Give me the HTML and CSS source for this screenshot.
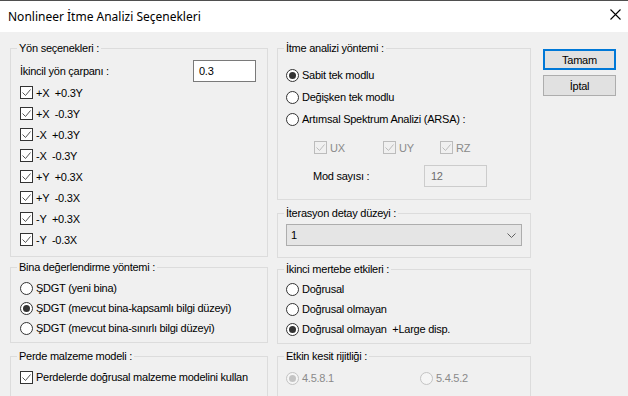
FILE: index.html
```html
<!DOCTYPE html>
<html lang="tr">
<head>
    <meta charset="UTF-8">
    <title>Nonlineer İtme Analizi Seçenekleri</title>
    <link rel="stylesheet" href="styles.css">
</head>
<body>
    <div class="titlebar">
        <span class="title">Nonlineer İtme Analizi Seçenekleri</span>
        <svg class="close" width="11" height="11" viewBox="0 0 11 11"><path d="M0.5 0.5 L10.5 10.5 M10.5 0.5 L0.5 10.5" stroke="#000" stroke-width="1.1" fill="none"/></svg>
    </div>

    <div class="main">
        <div class="col col-left">
            <fieldset class="g-yon">
                <legend>Yön seçenekleri :</legend>
                <div class="row-input">
                    <span>İkincil yön çarpanı :</span>
                    <div class="textbox">0.3</div>
                </div>
                <div class="opt"><span class="cb"><svg viewBox="0 0 11 11"><path d="M1.5 5.5 L4.5 8.5 L9.5 2.5" /></svg></span>+X  +0.3Y</div>
                <div class="opt"><span class="cb"><svg viewBox="0 0 11 11"><path d="M1.5 5.5 L4.5 8.5 L9.5 2.5" /></svg></span>+X  -0.3Y</div>
                <div class="opt"><span class="cb"><svg viewBox="0 0 11 11"><path d="M1.5 5.5 L4.5 8.5 L9.5 2.5" /></svg></span>-X  +0.3Y</div>
                <div class="opt"><span class="cb"><svg viewBox="0 0 11 11"><path d="M1.5 5.5 L4.5 8.5 L9.5 2.5" /></svg></span>-X  -0.3Y</div>
                <div class="opt"><span class="cb"><svg viewBox="0 0 11 11"><path d="M1.5 5.5 L4.5 8.5 L9.5 2.5" /></svg></span>+Y  +0.3X</div>
                <div class="opt"><span class="cb"><svg viewBox="0 0 11 11"><path d="M1.5 5.5 L4.5 8.5 L9.5 2.5" /></svg></span>+Y  -0.3X</div>
                <div class="opt"><span class="cb"><svg viewBox="0 0 11 11"><path d="M1.5 5.5 L4.5 8.5 L9.5 2.5" /></svg></span>-Y  +0.3X</div>
                <div class="opt"><span class="cb"><svg viewBox="0 0 11 11"><path d="M1.5 5.5 L4.5 8.5 L9.5 2.5" /></svg></span>-Y  -0.3X</div>
            </fieldset>

            <fieldset class="g-bina">
                <legend>Bina değerlendirme yöntemi :</legend>
                <div class="opt r20"><span class="rb"></span>ŞDGT (yeni bina)</div>
                <div class="opt r20"><span class="rb on"></span>ŞDGT (mevcut bina-kapsamlı bilgi düzeyi)</div>
                <div class="opt r20"><span class="rb"></span>ŞDGT (mevcut bina-sınırlı bilgi düzeyi)</div>
            </fieldset>

            <fieldset class="g-perde">
                <legend>Perde malzeme modeli :</legend>
                <div class="opt r20"><span class="cb"><svg viewBox="0 0 11 11"><path d="M1.5 5.5 L4.5 8.5 L9.5 2.5" /></svg></span>Perdelerde doğrusal malzeme modelini kullan</div>
            </fieldset>
        </div>

        <div class="col col-right">
            <fieldset class="g-itme">
                <legend>İtme analizi yöntemi :</legend>
                <div class="opt r22"><span class="rb on"></span>Sabit tek modlu</div>
                <div class="opt r22"><span class="rb"></span>Değişken tek modlu</div>
                <div class="opt r22"><span class="rb"></span>Artımsal Spektrum Analizi (ARSA) :</div>
                <div class="sub-checks">
                    <div class="opt dis w-ux"><span class="cb"><svg viewBox="0 0 11 11"><path d="M1.5 5.5 L4.5 8.5 L9.5 2.5" /></svg></span>UX</div>
                    <div class="opt dis w-uy"><span class="cb"><svg viewBox="0 0 11 11"><path d="M1.5 5.5 L4.5 8.5 L9.5 2.5" /></svg></span>UY</div>
                    <div class="opt dis"><span class="cb"><svg viewBox="0 0 11 11"><path d="M1.5 5.5 L4.5 8.5 L9.5 2.5" /></svg></span>RZ</div>
                </div>
                <div class="mod-row">
                    <span>Mod sayısı :</span>
                    <div class="textbox dis">12</div>
                </div>
            </fieldset>

            <fieldset class="g-iter">
                <legend>İterasyon detay düzeyi :</legend>
                <div class="select">
                    <span>1</span>
                    <svg width="9" height="5" viewBox="0 0 9 5"><path d="M0.5 0.5 L4.5 4.5 L8.5 0.5" stroke="#606060" fill="none"/></svg>
                </div>
            </fieldset>

            <fieldset class="g-ikinci">
                <legend>İkinci mertebe etkileri :</legend>
                <div class="opt r20"><span class="rb"></span>Doğrusal</div>
                <div class="opt r20"><span class="rb"></span>Doğrusal olmayan</div>
                <div class="opt r20"><span class="rb on"></span>Doğrusal olmayan  +Large disp.</div>
            </fieldset>

            <fieldset class="g-etkin">
                <legend>Etkin kesit rijitliği :</legend>
                <div class="etkin-row">
                    <div class="opt dis w-451"><span class="rb on"></span>4.5.8.1</div>
                    <div class="opt dis"><span class="rb"></span>5.4.5.2</div>
                </div>
            </fieldset>
        </div>

        <div class="buttons">
            <button class="btn default">Tamam</button>
            <button class="btn">İptal</button>
        </div>
    </div>
</body>
</html>
```

FILE: styles.css
```css
body {
    margin: 0;
    width: 628px;
    height: 396px;
    overflow: hidden;
    background: #f0f0f0;
    font-family: "Liberation Sans", Tahoma, sans-serif;
    font-size: 11px;
    letter-spacing: -0.25px;
    color: #000;
}

.titlebar {
    height: 31px;
    background: #fff;
    border-top: 1px solid #4f4f4f;
    display: flex;
    align-items: center;
    justify-content: space-between;
    padding: 0 7px 0 8px;
}

.title {
    font-family: "Noto Sans", sans-serif;
    font-size: 12px;
    letter-spacing: 0;
    margin-top: -1px;
}

.close {
    margin-top: -4px;
}

.main {
    display: flex;
    padding: 10px 0 0 10px;
}

.col {
    display: flex;
    flex-direction: column;
}

.col-left {
    width: 258px;
}

.col-right {
    width: 254px;
    margin-left: 9px;
}

fieldset {
    margin: 0;
    padding: 0;
    border: 1px solid #dcdcdc;
    box-sizing: border-box;
    min-width: 0;
}

legend {
    margin-left: 6px;
    padding: 0 2px;
    line-height: 13px;
}

.col-left fieldset > div {
    margin-left: 9px;
}

.col-right fieldset > div {
    margin-left: 8px;
}

/* sol kolon */
.g-yon {
    height: 215px;
    padding-top: 5px;
}

.g-bina {
    height: 82px;
    margin-top: 4px;
    padding-top: 4px;
}

.g-perde {
    height: 60px;
    margin-top: 7px;
    padding-top: 4px;
}

.row-input {
    display: flex;
    align-items: center;
    justify-content: space-between;
    padding-right: 11px;
    height: 22px;
}

.textbox {
    width: 63px;
    height: 22px;
    box-sizing: border-box;
    border: 1px solid #7a7a7a;
    background: #fff;
    padding-left: 5px;
    line-height: 20px;
}

.textbox.dis {
    border-color: #cccccc;
    background: #f0f0f0;
    color: #6d6d6d;
    padding-left: 6px;
}

.opt {
    display: flex;
    align-items: center;
    height: 21px;
    white-space: pre;
}

.opt.r20 {
    height: 20px;
}

.opt.r22 {
    height: 22px;
}

.opt.dis {
    color: #8a8a8a;
}

.cb {
    width: 13px;
    height: 13px;
    box-sizing: border-box;
    border: 1px solid #333;
    background: #fff;
    margin-right: 3px;
    flex: none;
}

.cb svg {
    display: block;
    width: 11px;
    height: 11px;
}

.cb path {
    stroke: #555;
    stroke-width: 1;
    fill: none;
}

.dis .cb {
    border-color: #bcbcbc;
    background: #f0f0f0;
}

.dis .cb path {
    stroke: #bcbcbc;
}

.rb {
    width: 13px;
    height: 13px;
    box-sizing: border-box;
    border: 1px solid #333;
    border-radius: 50%;
    background: #fff;
    margin-right: 3px;
    flex: none;
    display: flex;
    align-items: center;
    justify-content: center;
}

.rb.on::after {
    content: "";
    width: 7px;
    height: 7px;
    border-radius: 50%;
    background: #333;
}

.dis .rb {
    border-color: #c4c4c4;
    background: #f5f5f5;
}

.dis .rb.on::after {
    background: #c4c4c4;
}

/* sağ kolon */
.g-itme {
    height: 158px;
    padding-top: 9px;
}

.sub-checks {
    display: flex;
    margin-top: 7px;
    padding-left: 28px;
}

.w-ux {
    width: 69px;
}

.w-uy {
    width: 57px;
}

.mod-row {
    display: flex;
    align-items: center;
    margin-top: 7px;
    padding-left: 27px;
}

.mod-row span {
    width: 111px;
}

.g-iter {
    height: 51px;
    margin-top: 7px;
    padding-top: 4px;
}

.select {
    width: 236px;
    height: 22px;
    box-sizing: border-box;
    border: 1px solid #adadad;
    background: #e5e5e5;
    display: flex;
    align-items: center;
    justify-content: space-between;
    padding: 0 5px 0 4px;
}

.g-ikinci {
    height: 81px;
    margin-top: 5px;
    padding-top: 3px;
}

.g-etkin {
    height: 60px;
    margin-top: 6px;
    padding-top: 5px;
}

.etkin-row {
    display: flex;
}

.w-451 {
    width: 134px;
    height: 20px;
}

.etkin-row .opt {
    height: 20px;
}

/* butonlar */
.buttons {
    display: flex;
    flex-direction: column;
    margin-left: 12px;
    padding-top: 7px;
}

.btn {
    width: 73px;
    height: 21px;
    box-sizing: border-box;
    border: 1px solid #adadad;
    background: #e1e1e1;
    font-family: "Liberation Sans", Tahoma, sans-serif;
    font-size: 11px;
    letter-spacing: -0.25px;
    color: #000;
    padding: 0;
    margin-bottom: 5px;
}

.btn.default {
    border: 2px solid #0078d7;
}
```
